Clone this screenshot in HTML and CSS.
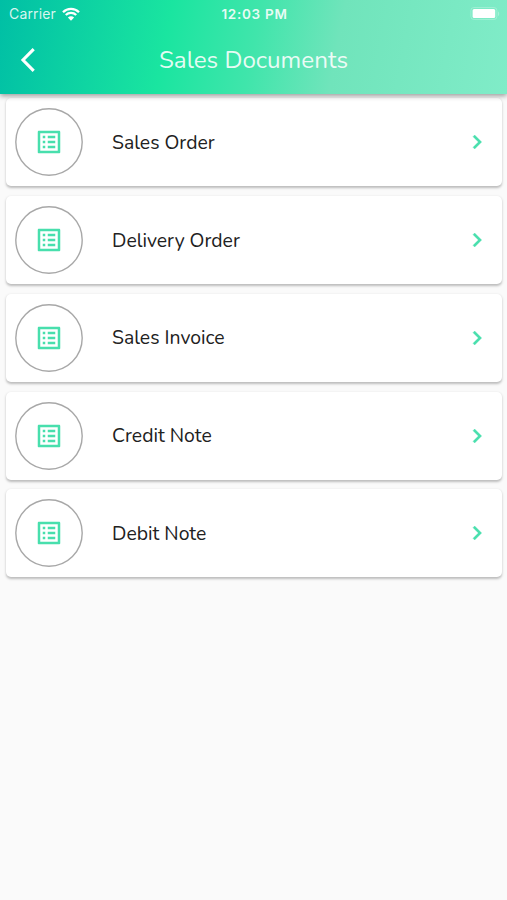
FILE: index.html
```html
<!DOCTYPE html>
<html lang="en">
<head>
    <meta charset="UTF-8">
    <meta name="viewport" content="width=device-width, initial-scale=1.0">
    <title>Sales Documents</title>
    <link rel="stylesheet" href="styles.css">
</head>
<body>

<!-- shared icons -->
<svg class="sprite" width="0" height="0">
    <symbol id="icon-circle" viewBox="0 0 68 68">
        <circle cx="34" cy="34" r="33.2" fill="none" stroke="#a8a8a8" stroke-width="1.4"/>
    </symbol>
    <symbol id="icon-list" viewBox="0 0 24 24">
        <path d="M19 5v14H5V5h14m1.1-2H3.9c-.5 0-.9.4-.9.9v16.2c0 .4.4.9.9.9h16.2c.4 0 .9-.5.9-.9V3.9c0-.5-.5-.9-.9-.9zM11 7h6v2h-6V7zm0 4h6v2h-6v-2zm0 4h6v2h-6v-2zM7 7h2v2H7V7zm0 4h2v2H7v-2zm0 4h2v2H7v-2z"/>
    </symbol>
    <symbol id="icon-next" viewBox="0 0 24 24">
        <path d="M10 6L8.59 7.41 13.17 12l-4.58 4.59L10 18l6-6z" stroke="#48dfad" stroke-width=".3"/>
    </symbol>
</svg>

<header class="header">
    <div class="status-bar">
        <div class="carrier">
            <span>Carrier</span>
            <svg class="wifi" viewBox="0 0 18 14">
                <path d="M1 5.2a11.3 11.3 0 0 1 16 0M3.8 8a7.4 7.4 0 0 1 10.4 0" fill="none" stroke="#fff" stroke-width="2.3"/>
                <path d="M9 13.8L5.9 10.6a4.4 4.4 0 0 1 6.2 0z" fill="#fff"/>
            </svg>
        </div>
        <div class="time">12:03 PM</div>
        <div class="battery-wrap">
            <svg class="battery" viewBox="0 0 30 14">
                <rect x=".9" y=".5" width="26" height="12" rx="3" fill="none" stroke="#fff" stroke-opacity=".25"/>
                <rect x="2.6" y="2.1" width="22.6" height="8.8" rx="1.5" fill="#fff"/>
                <path d="M28 4.4c1.6.6 1.6 3.9 0 4.5z" fill="#fff" fill-opacity=".3"/>
            </svg>
        </div>
    </div>
    <div class="title-bar">
        <svg class="back" viewBox="0 0 16 24">
            <path d="M13.7 1.2L3 12l10.7 10.8" fill="none" stroke="#fff" stroke-width="3.1"/>
        </svg>
        <h1>Sales Documents</h1>
    </div>
</header>

<main class="list">
    <div class="card">
        <div class="circle"><svg class="ring"><use href="#icon-circle"/></svg><svg class="doc"><use href="#icon-list"/></svg></div>
        <span class="label">Sales Order</span>
        <svg class="next"><use href="#icon-next"/></svg>
    </div>
    <div class="card">
        <div class="circle"><svg class="ring"><use href="#icon-circle"/></svg><svg class="doc"><use href="#icon-list"/></svg></div>
        <span class="label">Delivery Order</span>
        <svg class="next"><use href="#icon-next"/></svg>
    </div>
    <div class="card">
        <div class="circle"><svg class="ring"><use href="#icon-circle"/></svg><svg class="doc"><use href="#icon-list"/></svg></div>
        <span class="label">Sales Invoice</span>
        <svg class="next"><use href="#icon-next"/></svg>
    </div>
    <div class="card">
        <div class="circle"><svg class="ring"><use href="#icon-circle"/></svg><svg class="doc"><use href="#icon-list"/></svg></div>
        <span class="label">Credit Note</span>
        <svg class="next"><use href="#icon-next"/></svg>
    </div>
    <div class="card">
        <div class="circle"><svg class="ring"><use href="#icon-circle"/></svg><svg class="doc"><use href="#icon-list"/></svg></div>
        <span class="label">Debit Note</span>
        <svg class="next"><use href="#icon-next"/></svg>
    </div>
</main>

</body>
</html>
```
FILE: styles.css
```css
* {
    box-sizing: border-box;
}
body {
    font-family: Nunito, Lato, sans-serif;
    background-color: #fafafa;
    color: #212121;
    margin: 0;
    min-height: 100vh;
}
.sprite {
    display: block;
}
.header {
    position: relative;
    height: 94px;
    color: white;
    background: linear-gradient(100.5deg, #00bfa5 0%, #1ae5a0 33%, #40e5ab 50%, #70e4bb 66%, #80ecc8 100%);
    box-shadow: 0 2px 5px rgba(0, 0, 0, 0.38);
}
.status-bar {
    display: grid;
    grid-template-columns: 1fr auto 1fr;
    align-items: center;
    height: 27px;
    padding: 0 7px 0 9px;
    font-family: Inter, sans-serif;
    font-size: 14px;
}
.carrier {
    display: flex;
    align-items: center;
    gap: 6px;
    letter-spacing: 0.15px;
    color: rgba(255, 255, 255, 0.85);
}
.wifi {
    width: 18px;
    height: 14px;
}
.time {
    font-size: 13.5px;
    font-weight: 600;
    letter-spacing: 0.7px;
    color: rgba(255, 255, 255, 0.9);
}
.battery-wrap {
    display: flex;
    justify-content: flex-end;
}
.battery {
    width: 30px;
    height: 14px;
}
.title-bar {
    display: grid;
    grid-template-columns: 60px 1fr 60px;
    align-items: center;
    height: 66px;
}
.back {
    width: 16px;
    height: 24px;
    margin-left: 20px;
}
.title-bar h1 {
    margin: 0;
    font-size: 24.2px;
    font-weight: 400;
    text-align: center;
    color: rgba(255, 255, 255, 0.88);
}
.list {
    display: flex;
    flex-direction: column;
    gap: 9.75px;
    padding: 4.3px 5px 0 6px;
}
.card {
    display: flex;
    align-items: center;
    height: 88px;
    padding: 0 11px 0 9px;
    background-color: white;
    border-radius: 5px;
    box-shadow: 0 1.5px 2.5px rgba(0, 0, 0, 0.25);
}
.circle {
    display: grid;
    place-items: center;
    width: 68px;
    height: 68px;
}
.circle svg {
    grid-area: 1 / 1;
}
.ring {
    width: 68px;
    height: 68px;
}
.doc {
    width: 30px;
    height: 30px;
    fill: #48dfad;
}
.label {
    flex: 1;
    margin-left: 29px;
    font-size: 19.4px;
}
.next {
    width: 28px;
    height: 28px;
    fill: #48dfad;
}
```
